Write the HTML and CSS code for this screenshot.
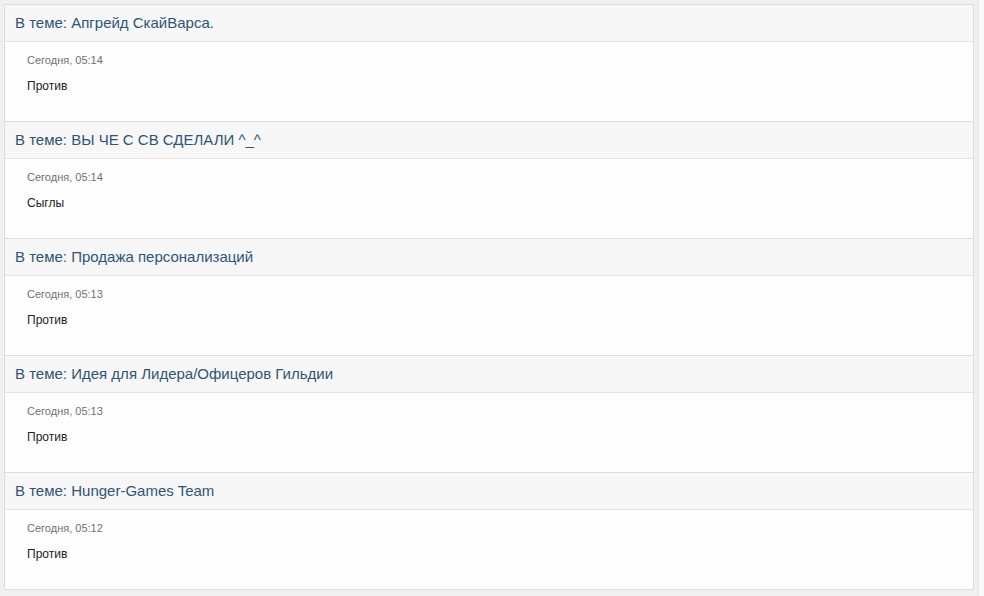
FILE: index.html
```html
<!DOCTYPE html>
<html lang="ru">
<head>
<meta charset="utf-8">
<link rel="stylesheet" href="styles.css">
</head>
<body>
<div class="page">
  <div class="panel">
    <div class="item">
      <div class="item-head">В теме: Апгрейд СкайВарса.</div>
      <div class="item-body">
        <div class="date">Сегодня, 05:14</div>
        <div class="text">Против</div>
      </div>
    </div>
    <div class="item">
      <div class="item-head">В теме: ВЫ ЧЕ С СВ СДЕЛАЛИ ^_^</div>
      <div class="item-body">
        <div class="date">Сегодня, 05:14</div>
        <div class="text">Сыглы</div>
      </div>
    </div>
    <div class="item">
      <div class="item-head">В теме: Продажа персонализаций</div>
      <div class="item-body">
        <div class="date">Сегодня, 05:13</div>
        <div class="text">Против</div>
      </div>
    </div>
    <div class="item">
      <div class="item-head">В теме: Идея для Лидера/Офицеров Гильдии</div>
      <div class="item-body">
        <div class="date">Сегодня, 05:13</div>
        <div class="text">Против</div>
      </div>
    </div>
    <div class="item">
      <div class="item-head">В теме: Hunger-Games Team</div>
      <div class="item-body">
        <div class="date">Сегодня, 05:12</div>
        <div class="text">Против</div>
      </div>
    </div>
  </div>
</div>
</body>
</html>
```
FILE: styles.css
```css
html, body {
  margin: 0;
  padding: 0;
  background: #fafafa;
  font-family: "Liberation Sans", Arial, sans-serif;
}
.page {
  width: 970px;
  height: 589px;
  padding: 4px;
  background: #f0f0f0;
  border-right: 1px solid #e6e6e6;
  border-bottom: 1px solid #e6e6e6;
}
.panel {
  border: 1px solid #dddddd;
  background: #ffffff;
}
.item + .item {
  border-top: 1px solid #dddddd;
}
.item-head {
  height: 36px;
  box-sizing: border-box;
  display: flex;
  align-items: center;
  padding: 0 10px 1px;
  background: #f7f7f7;
  border-bottom: 1px solid #e3e3e3;
  color: #2e5575;
  font-size: 15px;
}
.item-head {
  height: 37px;
}
.item-body {
  height: 79px;
  box-sizing: border-box;
  padding: 11px 22px 0;
  background: #fefefe;
}
.date {
  font-size: 11px;
  color: #707070;
  line-height: 14px;
}
.text {
  margin-top: 12px;
  font-size: 12px;
  color: #222222;
  line-height: 14px;
}
```
